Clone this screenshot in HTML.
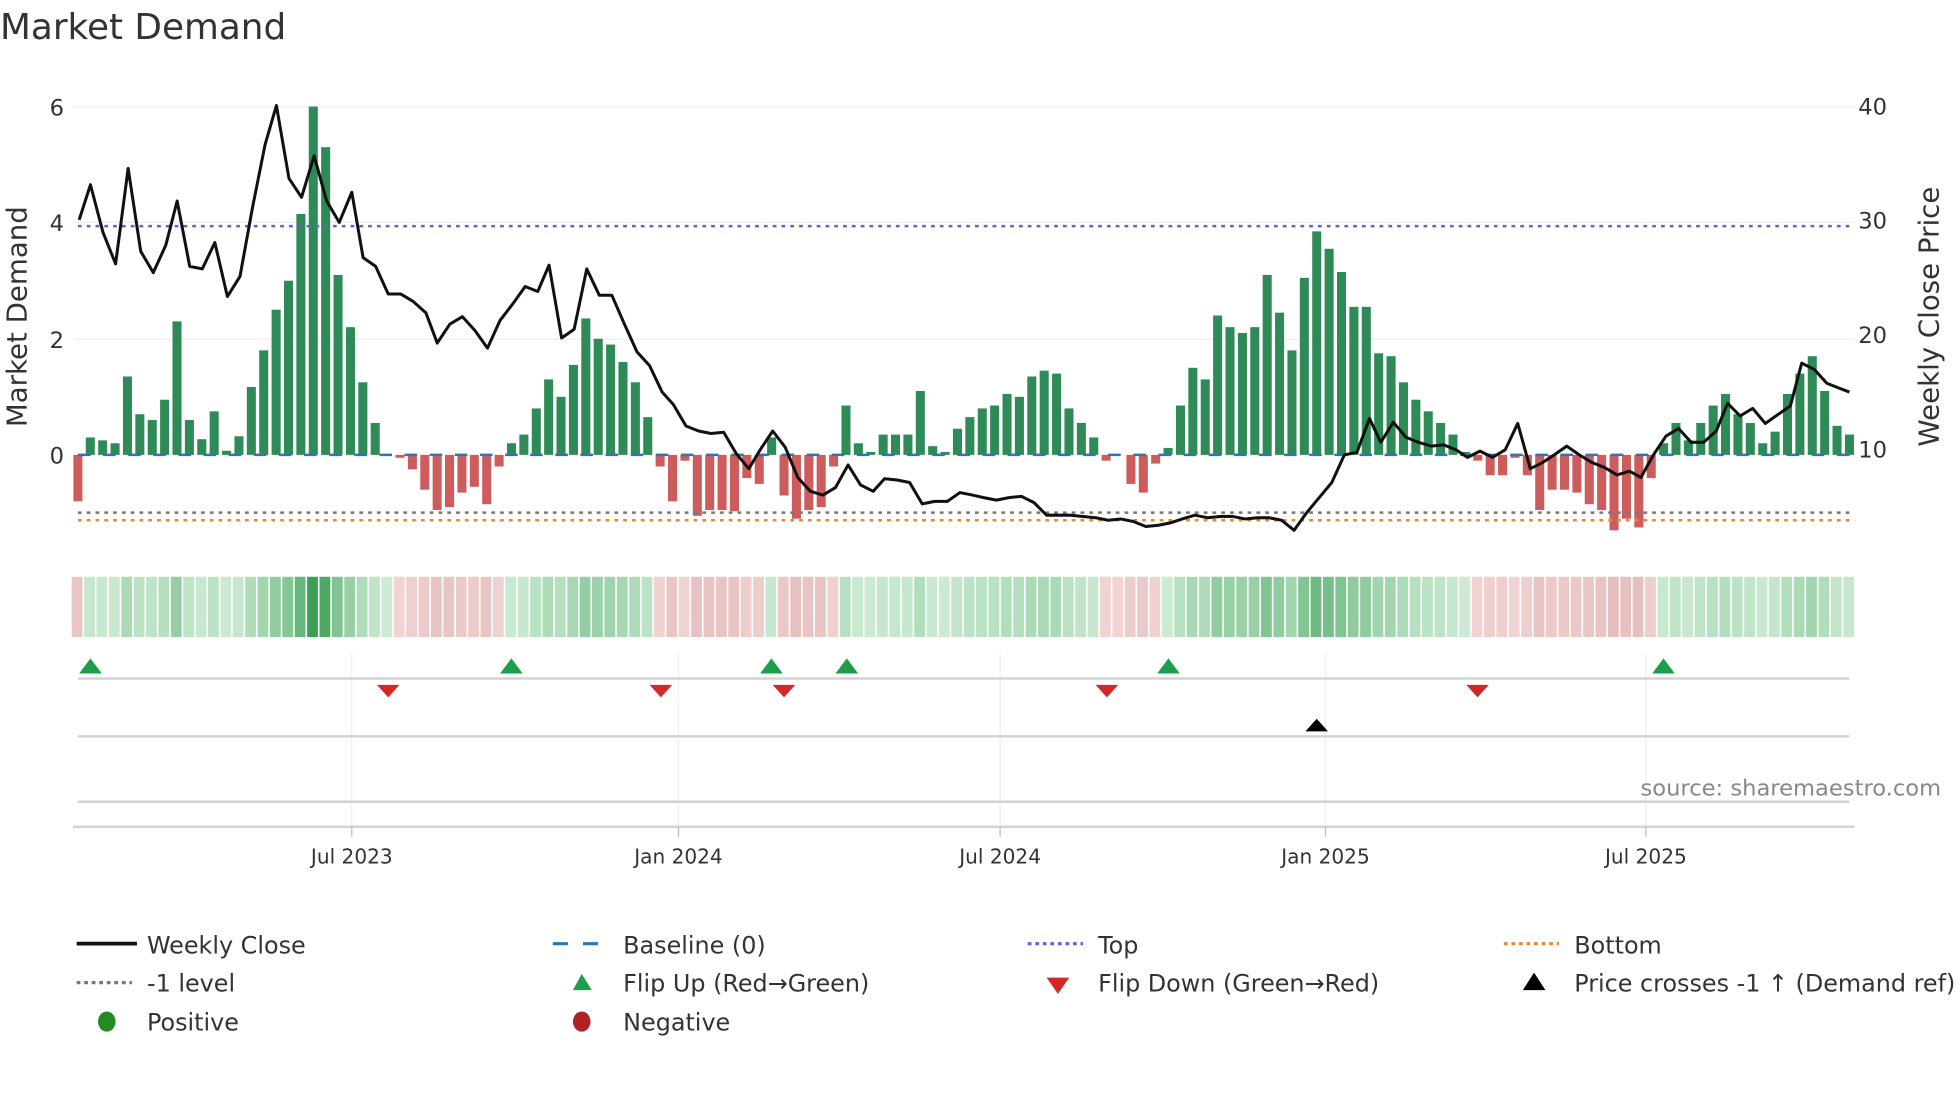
<!DOCTYPE html>
<html><head><meta charset="utf-8"><style>
html,body{margin:0;padding:0;background:#fff;width:1960px;height:1102px;overflow:hidden}
svg{display:block;font-family:"DejaVu Sans","Liberation Sans",sans-serif}
</style></head><body>
<svg id="s" width="1960" height="1102" viewBox="0 0 1560 877" preserveAspectRatio="none" xmlns="http://www.w3.org/2000/svg">
<text x="0" y="31" font-size="28.5" fill="#333">Market Demand</text>
<g stroke="#eceef2" stroke-width="1">
<line x1="58" y1="85" x2="1476" y2="85"/><line x1="58" y1="177" x2="1476" y2="177"/><line x1="58" y1="270" x2="1476" y2="270"/>
<line x1="280" y1="520" x2="280" y2="658"/><line x1="540" y1="520" x2="540" y2="658"/><line x1="796" y1="520" x2="796" y2="658"/><line x1="1055" y1="520" x2="1055" y2="658"/><line x1="1310" y1="520" x2="1310" y2="658"/>
</g>
<g font-size="18" fill="#333" text-anchor="end">
<text x="51" y="92">6</text><text x="51" y="184">4</text><text x="51" y="277">2</text><text x="51" y="369">0</text>
</g>
<g font-size="18" fill="#333">
<text x="1479" y="91">40</text><text x="1479" y="182">30</text><text x="1479" y="273">20</text><text x="1479" y="364">10</text>
</g>
<text transform="translate(21,252) rotate(-90)" font-size="22" fill="#333" text-anchor="middle">Market Demand</text>
<text transform="translate(1543,252) rotate(-90)" font-size="22" fill="#333" text-anchor="middle">Weekly Close Price</text>
<g id="bars"></g>
<g id="heat"></g>
<line x1="62" y1="180" x2="1472" y2="180" stroke="#6a5fd6" stroke-width="2" stroke-dasharray="3,4"/>
<line x1="62" y1="408" x2="1472" y2="408" stroke="#777" stroke-width="2" stroke-dasharray="3,4"/>
<line x1="62" y1="414" x2="1472" y2="414" stroke="#e8892b" stroke-width="2" stroke-dasharray="3,4"/>
<line x1="62" y1="362" x2="1472" y2="362" stroke="#2a77b4" stroke-width="2" stroke-dasharray="10,10"/>
<polyline id="price" fill="none" stroke="#111" stroke-width="2.4" stroke-linejoin="round"/>
<g stroke="#d4d4d4" stroke-width="2">
<line x1="62" y1="540" x2="1472" y2="540"/><line x1="62" y1="586" x2="1472" y2="586"/><line x1="62" y1="638" x2="1472" y2="638"/>
<line x1="58" y1="658" x2="1476" y2="658"/>
</g>
<g stroke="#bbb" stroke-width="1">
<line x1="280" y1="658" x2="280" y2="666"/><line x1="540" y1="658" x2="540" y2="666"/><line x1="796" y1="658" x2="796" y2="666"/><line x1="1055" y1="658" x2="1055" y2="666"/><line x1="1310" y1="658" x2="1310" y2="666"/>
</g>
<g id="tri"></g>
<text x="1545" y="633" font-size="18" fill="#888" text-anchor="end">source: sharemaestro.com</text>
<g font-size="16" fill="#333" text-anchor="middle">
<text x="280" y="687">Jul 2023</text><text x="540" y="687">Jan 2024</text><text x="796" y="687">Jul 2024</text><text x="1055" y="687">Jan 2025</text><text x="1310" y="687">Jul 2025</text>
</g>
<g font-size="19" fill="#333">
<line x1="61" y1="751" x2="109" y2="751" stroke="#111" stroke-width="3"/><text x="117" y="759">Weekly Close</text>
<line x1="440" y1="751" x2="488" y2="751" stroke="#2a77b4" stroke-width="2.5" stroke-dasharray="12,12"/><text x="496" y="759">Baseline (0)</text>
<line x1="818" y1="751" x2="862" y2="751" stroke="#6a5fd6" stroke-width="2.5" stroke-dasharray="3,3"/><text x="874" y="759">Top</text>
<line x1="1197" y1="751" x2="1241" y2="751" stroke="#e8892b" stroke-width="2.5" stroke-dasharray="3,3"/><text x="1253" y="759">Bottom</text>
<line x1="61" y1="782" x2="105" y2="782" stroke="#777" stroke-width="2.5" stroke-dasharray="3,3"/><text x="117" y="789">-1 level</text>
<polygon points="463,775 456,788 471,788" fill="#1f9e4a"/><text x="496" y="789">Flip Up (Red→Green)</text>
<polygon points="833,778 851,778 842,791" fill="#d62728"/><text x="874" y="789">Flip Down (Green→Red)</text>
<polygon points="1221,774 1212,788 1230,788" fill="#000"/><text x="1253" y="789">Price crosses -1 ↑ (Demand ref)</text>
<ellipse cx="85" cy="813" rx="7" ry="8" fill="#228b22"/><text x="117" y="820">Positive</text>
<ellipse cx="463" cy="813" rx="7" ry="8" fill="#b22222"/><text x="496" y="820">Negative</text>
</g>
</svg>
<script>
var v=[-0.8,0.3,0.25,0.2,1.35,0.7,0.6,0.95,2.3,0.6,0.27,0.75,0.07,0.32,1.17,1.8,2.5,3.0,4.15,6.0,5.3,3.1,2.2,1.25,0.55,0,-0.05,-0.25,-0.6,-0.95,-0.9,-0.65,-0.55,-0.85,-0.2,0.2,0.35,0.8,1.3,1.0,1.55,2.35,2.0,1.9,1.6,1.25,0.65,-0.2,-0.8,-0.1,-1.05,-0.95,-0.95,-0.97,-0.4,-0.5,0.3,-0.7,-1.1,-0.95,-0.9,-0.2,0.85,0.2,0.05,0.35,0.35,0.35,1.1,0.15,0.05,0.45,0.65,0.8,0.85,1.05,1.0,1.35,1.45,1.4,0.8,0.55,0.3,-0.1,0,-0.5,-0.65,-0.15,0.12,0.85,1.5,1.3,2.4,2.2,2.1,2.2,3.1,2.45,1.8,3.05,3.85,3.55,3.15,2.55,2.55,1.75,1.7,1.25,0.95,0.75,0.55,0.35,0.05,-0.1,-0.35,-0.35,-0.05,-0.35,-0.95,-0.6,-0.6,-0.65,-0.85,-0.95,-1.3,-1.1,-1.25,-0.4,0.2,0.55,0.25,0.55,0.85,1.05,0.7,0.55,0.2,0.4,1.05,1.4,1.7,1.1,0.5,0.35];
var NS="http://www.w3.org/2000/svg";
function el(t,a,p){var e=document.createElementNS(NS,t);for(var k in a)e.setAttribute(k,a[k]);document.getElementById(p).appendChild(e);}
var n=v.length,step=(1472-62)/(n-1);
var sign=1;
for(var i=0;i<n;i++){var x=62+step*i,d=v[i],h=d*46.2;
 if(d>0)el('rect',{x:x-3.6,y:362-h,width:7.2,height:h,fill:'#2e8b57'},'bars');
 else if(d<0)el('rect',{x:x-3.6,y:362,width:7.2,height:-h,fill:'#cd5c5c'},'bars');
 if(d>0)sign=1;else if(d<0)sign=-1;
 var c;
 if(sign>0){var t=Math.min(1,d/6);var r=Math.round(205-(205-58)*t),g=Math.round(235-(235-160)*t),b=Math.round(212-(212-85)*t);c='rgb('+r+','+g+','+b+')';}
 else{var t=Math.min(1,-d/1.3);var r=Math.round(242-(242-228)*t),g=Math.round(212-(212-190)*t),b=Math.round(212-(212-190)*t);c='rgb('+r+','+g+','+b+')';}
 el('rect',{x:x-4.9,y:459,width:8.6,height:48,fill:c},'heat');
}
var p="63,175 72,147 82,185 92,210 102,134 112,200 122,217 132,195 141,160 151,212 161,214 171,193 181,236 191,220 201,165 211,115 220,84 230,142 240,157 250,124 260,160 270,177 280,153 289,205 299,212 309,234 319,234 329,240 339,249 348,273 358,258 368,252 378,263 388,277 398,255 408,242 418,228 428,232 437,211 447,269 457,262 467,214 477,235 487,235 497,258 507,280 517,291 527,312 536,322 546,339 556,343 566,345 576,344 586,361 596,373 605,358 615,343 625,356 635,380 645,391 655,394 665,388 675,370 685,386 695,391 704,381 714,382 724,384 734,401 744,399 754,399 764,392 774,394 783,396 793,398 803,396 813,395 823,400 833,410 843,410 852,410 862,411 872,412 882,414 892,413 902,415 912,419 922,418 932,416 941,413 951,410 961,412 971,411 981,411 991,413 1001,412 1010,412 1020,414 1030,422 1040,408 1050,396 1060,384 1070,362 1080,360 1090,333 1099,352 1109,336 1119,348 1129,352 1139,355 1149,354 1159,358 1168,364 1178,359 1188,364 1198,358 1208,337 1218,373 1228,368 1237,362 1247,355 1257,362 1267,368 1277,372 1287,378 1297,375 1306,380 1316,362 1326,347 1336,341 1346,352 1356,352 1366,343 1375,321 1385,331 1395,325 1405,337 1415,330 1425,323 1434,289 1444,294 1454,305 1464,309 1472,312";
document.getElementById('price').setAttribute('points',p);
[72,407,614,674,930,1324].forEach(function(x){el('polygon',{points:(x)+',524 '+(x-9)+',536 '+(x+9)+',536',fill:'#1f9e4a'},'tri');});
[309,526,624,881,1176].forEach(function(x){el('polygon',{points:(x-9)+',545 '+(x+9)+',545 '+x+',555',fill:'#d62728'},'tri');});
el('polygon',{points:'1048,572 1039,582 1057,582',fill:'#000'},'tri');
</script>
</body></html>
